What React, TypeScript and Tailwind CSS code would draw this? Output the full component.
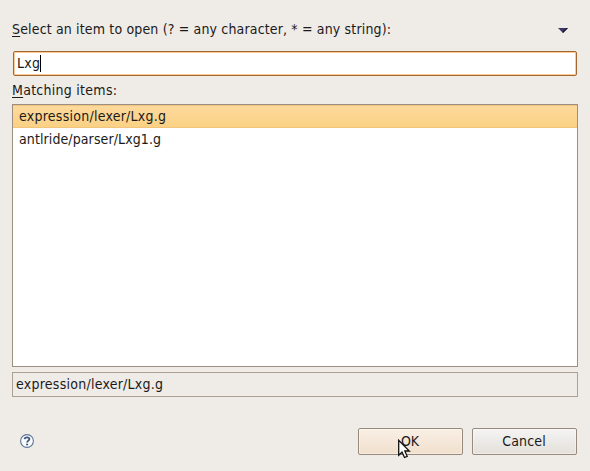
const mnemonic = "underline decoration-1 underline-offset-2 [text-decoration-skip-ink:none]";

const items = [
  { name: "expression/lexer/Lxg.g", style: "border-y border-t-[#f0c581] border-b-[#f0c47a] bg-linear-to-b/srgb from-[#fed99c] to-[#fad184] tracking-[0.25px]" },
  { name: "antlride/parser/Lxg1.g", style: "tracking-[0.1px]" },
];

function HelpIcon() {
  return (
    <svg className="mb-px ml-2" width="14" height="14" viewBox="0 0 14 14" fill="none">
      <circle cx="7" cy="7" r="6.4" fill="#fafcfe" stroke="#5f7496" strokeWidth="1.1" />
      <path d="M4.6 5.1C4.7 2.7 9.4 2.7 9.4 5.1C9.4 6.6 7.1 6.7 7.1 8.6" stroke="#3d5680" strokeWidth="1.8" />
      <path d="M6.1 9.7H8.1V11.3H6.1Z" fill="#3d5680" />
    </svg>
  );
}

function Pointer() {
  return (
    <svg className="absolute left-[38px] top-[9px]" width="15" height="21" viewBox="0 0 15 21">
      <path
        d="M1.7 2.4V17.3L5 14.2L7.5 19.5L10.2 18.3L7.8 13H12.3Z"
        fill="#fff"
        stroke="#111"
        strokeWidth="1.3"
      />
    </svg>
  );
}

export default function App() {
  return (
    <main className="flex h-[471px] w-[590px] flex-col bg-[#efebe7] pr-3 pl-3 font-['DejaVu_Sans_Condensed','DejaVu_Sans',sans-serif] text-[14px] leading-[17px] text-[#1a1a1a] [font-stretch:condensed]">
      <header className="mt-[21px] flex h-[17px] items-center justify-between whitespace-nowrap">
        <label className="tracking-[0.155px]">
          <span className={mnemonic}>S</span>elect an item to open (? = any character, * = any string):
        </label>
        <svg className="mt-[2px] mr-[10px]" width="10" height="5" viewBox="0 0 10 5">
          <path d="M0 0H10L5 5Z" fill="#3d3568" />
          <path d="M8.5 0H10L5 5L4.5 4Z" fill="#141221" />
        </svg>
      </header>
      <div className="mt-[13px] mr-px ml-px flex h-[25px] items-center rounded-[2px] border border-[#a5672f] bg-white pl-[3px] shadow-[inset_0_0_0_1px_#fcca94]">
        <span className="tracking-[0.3px]">Lxg</span>
        <span className="h-[17px] w-px bg-black" />
      </div>
      <div className="mt-[6px] h-[17px] tracking-[0.27px]">
        <span className={mnemonic}>M</span>atching items:
      </div>
      <ul className="mt-[5px] h-[263px] border border-[#9c8e80] bg-white">
        {items.map(({ name, style }) => (
          <li key={name} className={`flex h-[23px] items-center pl-[6px] ${style}`}>
            {name}
          </li>
        ))}
      </ul>
      <div className="mt-[5px] flex h-[25px] items-center border border-[#ad9f91] pl-[3px] tracking-[0.25px]">
        {items[0].name}
      </div>
      <footer className="mt-[31px] mr-px flex h-[27px] items-center">
        <HelpIcon />
        <div className="relative ml-auto flex h-[27px] w-[105px] items-center justify-center rounded-[2px] border border-[#97897c] bg-linear-to-b/srgb from-[#f9efe4] from-0% via-[#f5e8da] via-50% to-[#f0dfcb] pr-px shadow-[inset_0_0_0_1px_#fff6]">
          OK
          <Pointer />
        </div>
        <div className="ml-[9px] flex h-[27px] w-[105px] items-center justify-center rounded-[2px] border border-[#97897c] bg-linear-to-b/srgb from-[#f5f4f2] via-[#eceae7] via-50% to-[#e4e0da] pr-px tracking-[0.15px] shadow-[inset_0_0_0_1px_#fff6]">
          Cancel
        </div>
      </footer>
    </main>
  );
}
